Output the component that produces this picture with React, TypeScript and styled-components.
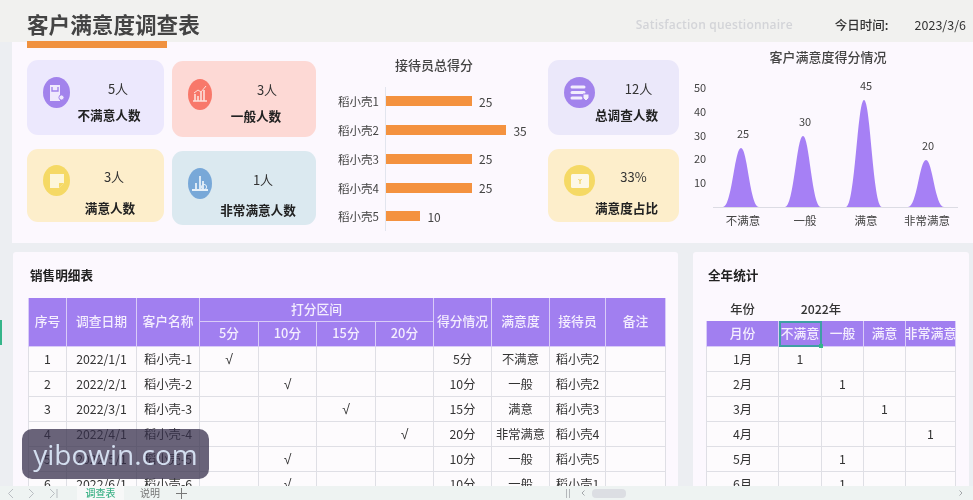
import { FC, ReactNode } from 'react'
import styled, { createGlobalStyle } from 'styled-components'

const GlobalStyle = createGlobalStyle`
  html, body {
    margin: 0;
    padding: 0;
    background: #eceef2;
  }
  body {
    font-family: "Noto Sans CJK SC", "Noto Sans", sans-serif;
    color: #333;
  }
`

const Page = styled.div`
  position: relative;
  width: 973px;
  height: 500px;
  overflow: hidden;
  display: flex;
  flex-direction: column;
  background: #eceef2;
  filter: blur(0.4px);
`

const RowMark = styled.div`
  position: absolute;
  left: 0;
  top: 320px;
  width: 2px;
  height: 25px;
  background: #35b58a;
`

const Header = styled.header`
  position: relative;
  flex: 0 0 42px;
  display: flex;
  align-items: center;
  padding: 6px 7px 0 27px;
  box-sizing: border-box;
  background: #f1f1ef;
`

const Title = styled.h1`
  margin: 0;
  font-size: 21.6px;
  font-weight: 700;
  color: #444;
  line-height: 30px;
`

const TitleBar = styled.div`
  position: absolute;
  left: 27px;
  top: 41px;
  width: 140px;
  height: 7px;
  background: #f0913f;
  z-index: 1;
`

const Subtitle = styled.span`
  flex: none;
  margin-left: 436px;
  width: 172px;
  font-family: "Open Sans", sans-serif;
  font-size: 12px;
  font-weight: 600;
  letter-spacing: 0.2px;
  white-space: nowrap;
  color: #d3d4d8;
`

const DateLabel = styled.span`
  margin-left: 27px;
  font-size: 12.5px;
  font-weight: 500;
  color: #333;
`

const DateValue = styled.span`
  margin-left: auto;
  font-size: 12.5px;
  color: #333;
`

const TopPanel = styled.section`
  flex: 0 0 201px;
  margin-left: 12px;
  padding-left: 15px;
  display: flex;
  box-sizing: border-box;
  background: #fcf8fe;
`

const CardColumn = styled.div<{ $top: number; $w: number; $left?: number }>`
  width: ${(p) => p.$w}px;
  margin-top: ${(p) => p.$top}px;
  margin-left: ${(p) => p.$left ?? 0}px;
  display: flex;
  flex-direction: column;
  gap: 14px;
`

const Card = styled.div<{ $bg: string; $h: number }>`
  height: ${(p) => p.$h}px;
  box-sizing: border-box;
  padding-left: 16px;
  border-radius: 11px;
  background: ${(p) => p.$bg};
  display: flex;
  align-items: center;
`

const IconDisc = styled.div<{ $bg: string; $w: number }>`
  flex: none;
  width: ${(p) => p.$w}px;
  height: 31px;
  margin-bottom: 10px;
  border-radius: 50%;
  background: ${(p) => p.$bg};
  display: flex;
  align-items: center;
  justify-content: center;
`

const CardText = styled.div<{ $right: number; $gap: number; $drop: number }>`
  flex: 1;
  box-sizing: border-box;
  padding: ${(p) => p.$drop}px ${(p) => p.$right}px 0 0;
  display: flex;
  flex-direction: column;
  align-items: center;
  gap: ${(p) => p.$gap}px;
`

const CardValue = styled.div<{ $offset: number }>`
  margin-left: ${(p) => p.$offset}px;
  font-size: 13px;
  line-height: 18px;
  color: #333;
`

const CardLabel = styled.div`
  font-size: 12.6px;
  font-weight: 700;
  line-height: 18px;
  color: #222;
  white-space: nowrap;
`

const BarChart = styled.div`
  width: 210px;
  margin-left: 22px;
  padding-top: 14px;
`

const ChartTitle = styled.div`
  font-size: 13px;
  font-weight: 500;
  line-height: 18px;
  color: #444;
  text-align: center;
`

const BarTitleWrap = styled.div`
  width: 192px;
  margin-bottom: 13px;
`

const BarRow = styled.div`
  height: 28.75px;
  display: grid;
  grid-template-columns: 47px 1fr;
  align-items: center;
  font-size: 11.5px;
  color: #444;
`

const BarTrack = styled.div`
  height: 100%;
  display: flex;
  align-items: center;
  gap: 7px;
  border-left: 1px solid #e2e5ee;
  font-size: 12px;
`

const BarFill = styled.div`
  height: 10px;
  background: #f4923f;
`

const ChartColumn = styled.div`
  width: 283px;
  margin-left: 11px;
  padding-top: 6px;
`

const ChartTitleWrap = styled.div`
  width: 276px;
`

const ChartSvg = styled.svg`
  display: block;
`

const ChartText = styled.text<{ $size: number }>`
  font-family: "Noto Sans CJK SC", sans-serif;
  font-size: ${(p) => p.$size}px;
  fill: #444;
`

const Bottom = styled.div`
  flex: 1;
  min-height: 0;
  margin-top: 9px;
  display: flex;
`

const SheetPanel = styled.section<{ $w: number; $left: number }>`
  width: ${(p) => p.$w}px;
  margin-left: ${(p) => p.$left}px;
  padding: 14px 0 0 ${(p) => (p.$w > 400 ? 15 : 13)}px;
  box-sizing: border-box;
  overflow: hidden;
  border-radius: 3px 3px 0 0;
  background: #fcf8fe;
`

const SheetTitle = styled.h2`
  margin: 0 0 14px 2px;
  font-size: 12.6px;
  font-weight: 700;
  line-height: 18px;
  color: #222;
`

const Table = styled.table<{ $w: number }>`
  width: ${(p) => p.$w}px;
  table-layout: fixed;
  border-collapse: collapse;
  font-size: 12.3px;
  color: #333;
`

const Th = styled.th<{ $h?: number }>`
  height: ${(p) => (p.$h ?? 22) - 2}px;
  padding: 0 0 2px;
  background: #a17ff0;
  border: 1px solid #d9ccf8;
  border-top: 0;
  font-size: 12.8px;
  line-height: 18px;
  font-weight: 500;
  color: #f4eefe;
  white-space: nowrap;
`

const SelectedTh = styled(Th)`
  position: relative;
  outline: 2px solid #3f9fa5;
  outline-offset: -2px;
  &::after {
    content: '';
    position: absolute;
    right: -2px;
    bottom: -2px;
    width: 4px;
    height: 4px;
    background: #35b58a;
  }
`

const ClipLabel = styled.div`
  display: flex;
  justify-content: center;
  overflow: hidden;
  font-size: 13px;
`

const Td = styled.td`
  height: 24px;
  padding: 0;
  background: #fdfbfd;
  border: 1px solid #dfdfe5;
  text-align: center;
  line-height: 18px;
  white-space: nowrap;
`

const Check = styled.span`
  font-family: "Liberation Sans", sans-serif;
  font-size: 14px;
`

const PlainTd = styled.td`
  height: 22px;
  padding: 0 0 1px;
  text-align: center;
  line-height: 18px;
  font-weight: 500;
`

const TabBar = styled.footer`
  flex: 0 0 14px;
  display: flex;
  align-items: center;
  font-size: 10px;
  color: #8a8f94;
  background: #eef3f2;
`

const NavIcon = styled.svg<{ $left: number }>`
  flex: none;
  margin-left: ${(p) => p.$left}px;
`

const ActiveTab = styled.span`
  width: 47px;
  margin-left: 19px;
  line-height: 14px;
  text-align: center;
  font-weight: 500;
  color: #3fb388;
  background: #f7f8f8;
`

const Tab = styled.span`
  margin-left: 16px;
  line-height: 14px;
  color: #777;
`

const ScrollThumb = styled.span`
  width: 34px;
  height: 9px;
  margin-left: 7px;
  border-radius: 4px;
  background: #dcdee3;
`

const Watermark = styled.div`
  position: absolute;
  left: 22px;
  top: 429px;
  width: 187px;
  height: 50px;
  border-radius: 10px;
  background: rgba(52, 46, 74, 0.74);
  display: flex;
  align-items: center;
  justify-content: center;
  font-family: "Open Sans", sans-serif;
  font-size: 28px;
  color: #d3deef;
`

const DocIcon = () => (
  <svg width="16" height="18" viewBox="0 0 16 18">
    <path d="M1 1h10v16H1z" fill="#efe9fd" />
    <path d="M3 3v4h6V3" fill="none" stroke="#a283ec" strokeWidth="1.4" />
    <circle cx="12.5" cy="13.5" r="2.6" fill="#efe9fd" stroke="#a283ec" />
  </svg>
)

const BarsIcon = () => (
  <svg width="16" height="18" viewBox="0 0 16 18">
    <path d="M1 16h14M3 16V9M6 16V11M9 16V7M12 16V5" stroke="#fde0da" strokeWidth="1.6" fill="none" />
    <path d="M2 8l4-3 3 2 5-6" stroke="#fde0da" fill="none" />
  </svg>
)

const NoteIcon = () => (
  <svg width="18" height="18" viewBox="0 0 18 18">
    <path d="M2 2h14v9l-5 5H2z" fill="#fdf6d8" />
    <path d="M11 16v-5h5" fill="#f5d965" />
  </svg>
)

const GrowthIcon = () => (
  <svg width="18" height="20" viewBox="0 0 18 20">
    <path d="M1 17h16M5 17V10M9 17V3M12 17V8" stroke="#e6f0f9" strokeWidth="1.8" fill="none" />
    <circle cx="13" cy="14" r="2.6" fill="none" stroke="#e6f0f9" />
    <path d="M15 16l2 2" stroke="#e6f0f9" />
  </svg>
)

const StackIcon = () => (
  <svg width="20" height="18" viewBox="0 0 20 18">
    <path d="M2 3h12M2 8.5h12M2 14h9" stroke="#f2edfd" strokeWidth="3" strokeLinecap="round" fill="none" />
    <path d="M13 10h6v4l-3 3-3-3z" fill="#f2edfd" stroke="#a283ec" />
  </svg>
)

const TicketIcon = () => (
  <svg width="20" height="16" viewBox="0 0 20 16">
    <rect x="1" y="1" width="18" height="14" rx="1.5" fill="#fdf8e6" />
    <path d="M8.5 6l1.5 1.8L11.5 6M10 7.8V11" stroke="#eccb4f" fill="none" />
  </svg>
)

interface StatProps {
  bg: string
  h: number
  disc: string
  discW: number
  value: string
  label: string
  right: number
  gap: number
  drop: number
  offset: number
  icon: ReactNode
}

const Stat: FC<StatProps> = ({ bg, h, disc, discW, value, label, right, gap, drop, offset, icon }) => (
  <Card $bg={bg} $h={h}>
    <IconDisc $bg={disc} $w={discW}>{icon}</IconDisc>
    <CardText $right={right} $gap={gap} $drop={drop}>
      <CardValue $offset={offset}>{value}</CardValue>
      <CardLabel>{label}</CardLabel>
    </CardText>
  </Card>
)

const barData = [
  { name: '稻小壳1', score: 25 },
  { name: '稻小壳2', score: 35 },
  { name: '稻小壳3', score: 25 },
  { name: '稻小壳4', score: 25 },
  { name: '稻小壳5', score: 10 },
]

const peaks = [
  { x: 741, score: 25, top: 148, label: '不满意' },
  { x: 803, score: 30, top: 136, label: '一般' },
  { x: 864, score: 45, top: 100, label: '满意' },
  { x: 926, score: 20, top: 160, label: '非常满意' },
]

const ticks = [
  { v: 50, y: 88 },
  { v: 40, y: 112 },
  { v: 30, y: 136 },
  { v: 20, y: 159 },
  { v: 10, y: 183 },
]

const peakPath = (x: number, top: number) =>
  `M${x - 18} 207C${x - 9} 207 ${x - 6.5} ${top} ${x} ${top}C${x + 6.5} ${top} ${x + 9} 207 ${x + 18} 207Z`

const detailRows = [
  ['1', '2022/1/1', '稻小壳-1', 0, '5分', '不满意', '稻小壳2'],
  ['2', '2022/2/1', '稻小壳-2', 1, '10分', '一般', '稻小壳2'],
  ['3', '2022/3/1', '稻小壳-3', 2, '15分', '满意', '稻小壳3'],
  ['4', '2022/4/1', '稻小壳-4', 3, '20分', '非常满意', '稻小壳4'],
  ['5', '2022/5/1', '稻小壳-5', 1, '10分', '一般', '稻小壳5'],
  ['6', '2022/6/1', '稻小壳-6', 1, '10分', '一般', '稻小壳1'],
]

const detailCols = [38, 70, 63, 59, 58, 59, 58, 58, 58, 56, 60]
const yearCols = [72, 43, 42, 42, 50]

const yearRows = [
  ['1月', 0],
  ['2月', 1],
  ['3月', 2],
  ['4月', 3],
  ['5月', 1],
  ['6月', 1],
] as const

const App: FC = () => (
  <Page>
    <GlobalStyle />
    <RowMark />
    <Header>
      <Title>客户满意度调查表</Title>
      <TitleBar />
      <Subtitle>Satisfaction questionnaire</Subtitle>
      <DateLabel>今日时间:</DateLabel>
      <DateValue>2023/3/6</DateValue>
    </Header>

    <TopPanel>
      <CardColumn $top={18} $w={137}>
        <Stat bg="#ece8fd" h={75} disc="#a283ec" discW={27} value="5人" label="不满意人数" right={16} gap={8} drop={9} offset={18} icon={<DocIcon />} />
        <Stat bg="#fdeecb" h={73} disc="#f5d965" discW={27} value="3人" label="满意人数" right={14} gap={13} drop={14} offset={8} icon={<NoteIcon />} />
      </CardColumn>
      <CardColumn $top={19} $w={144} $left={8}>
        <Stat bg="#fdd9d5" h={76} disc="#f8786a" discW={24} value="3人" label="一般人数" right={16} gap={8} drop={8} offset={22} icon={<BarsIcon />} />
        <Stat bg="#dbe9f0" h={74} disc="#78a8d8" discW={24} value="1人" label="非常满意人数" right={12} gap={12} drop={14} offset={10} icon={<GrowthIcon />} />
      </CardColumn>

      <BarChart>
        <BarTitleWrap>
          <ChartTitle>接待员总得分</ChartTitle>
        </BarTitleWrap>
        {barData.map((item) => (
          <BarRow key={item.name}>
            <span>{item.name}</span>
            <BarTrack>
              <BarFill style={{ width: item.score * 3.44 }} />
              {item.score}
            </BarTrack>
          </BarRow>
        ))}
      </BarChart>

      <CardColumn $top={18} $w={131}>
        <Stat bg="#ebe8fa" h={75} disc="#a283ec" discW={31} value="12人" label="总调查人数" right={26} gap={8} drop={8} offset={24} icon={<StackIcon />} />
        <Stat bg="#fdeecb" h={73} disc="#f5d965" discW={31} value="33%" label="满意度占比" right={24} gap={13} drop={14} offset={14} icon={<TicketIcon />} />
      </CardColumn>

      <ChartColumn>
        <ChartTitleWrap>
          <ChartTitle>客户满意度得分情况</ChartTitle>
        </ChartTitleWrap>
        <ChartSvg width="283" height="170" viewBox="690 66 283 170">
          {ticks.map((t) => (
            <ChartText key={t.v} $size={11} x="694" y={t.y + 4}>{t.v}</ChartText>
          ))}
          <line x1="713" y1="207.5" x2="958" y2="207.5" stroke="#dcdce4" />
          {peaks.map((p) => (
            <g key={p.label}>
              <path d={peakPath(p.x, p.top)} fill="#a680f5" />
              <ChartText $size={11} x={p.x + 2} y={p.top - 10} textAnchor="middle">{p.score}</ChartText>
              <ChartText $size={11.5} x={p.x + (p.label.length === 4 ? 1 : 2)} y={225} textAnchor="middle">{p.label}</ChartText>
            </g>
          ))}
        </ChartSvg>
      </ChartColumn>
    </TopPanel>

    <Bottom>
      <SheetPanel $w={665} $left={13}>
        <SheetTitle>销售明细表</SheetTitle>
        <Table $w={637}>
          <colgroup>
            {detailCols.map((w, i) => (
              <col key={i} style={{ width: w }} />
            ))}
          </colgroup>
          <thead>
            <tr>
              <Th rowSpan={2}>序号</Th>
              <Th rowSpan={2}>调查日期</Th>
              <Th rowSpan={2}>客户名称</Th>
              <Th colSpan={4} $h={23}>打分区间</Th>
              <Th rowSpan={2}>得分情况</Th>
              <Th rowSpan={2}>满意度</Th>
              <Th rowSpan={2}>接待员</Th>
              <Th rowSpan={2}>备注</Th>
            </tr>
            <tr>
              <Th $h={24}>5分</Th>
              <Th $h={24}>10分</Th>
              <Th $h={24}>15分</Th>
              <Th $h={24}>20分</Th>
            </tr>
          </thead>
          <tbody>
            {detailRows.map((r) => (
              <tr key={r[0] as string}>
                <Td>{r[0]}</Td>
                <Td>{r[1]}</Td>
                <Td>{r[2]}</Td>
                {[0, 1, 2, 3].map((slot) => (
                  <Td key={slot}>{r[3] === slot ? <Check>√</Check> : ''}</Td>
                ))}
                <Td>{r[4]}</Td>
                <Td>{r[5]}</Td>
                <Td>{r[6]}</Td>
                <Td />
              </tr>
            ))}
          </tbody>
        </Table>
      </SheetPanel>

      <SheetPanel $w={276} $left={15}>
        <SheetTitle>全年统计</SheetTitle>
        <Table $w={249}>
          <colgroup>
            {yearCols.map((w, i) => (
              <col key={i} style={{ width: w }} />
            ))}
          </colgroup>
          <tbody>
            <tr>
              <PlainTd>年份</PlainTd>
              <PlainTd colSpan={2}>2022年</PlainTd>
              <PlainTd />
              <PlainTd />
            </tr>
            <tr>
              <Th $h={25}>月份</Th>
              <SelectedTh $h={25}>不满意</SelectedTh>
              <Th $h={25}>一般</Th>
              <Th $h={25}>满意</Th>
              <Th $h={25}><ClipLabel>非常满意</ClipLabel></Th>
            </tr>
            {yearRows.map(([month, hit]) => (
              <tr key={month}>
                <Td>{month}</Td>
                {[0, 1, 2, 3].map((slot) => (
                  <Td key={slot}>{hit === slot ? '1' : ''}</Td>
                ))}
              </tr>
            ))}
          </tbody>
        </Table>
      </SheetPanel>
    </Bottom>

    <TabBar>
      <NavIcon $left={7} width="7" height="11" viewBox="0 0 7 11">
        <path d="M6 1L1.5 5.5 6 10" fill="none" stroke="#b9bdc2" />
      </NavIcon>
      <NavIcon $left={14} width="7" height="11" viewBox="0 0 7 11">
        <path d="M1 1l4.5 4.5L1 10" fill="none" stroke="#b9bdc2" />
      </NavIcon>
      <NavIcon $left={14} width="9" height="11" viewBox="0 0 9 11">
        <path d="M1 1l4.5 4.5L1 10M8 1v9" fill="none" stroke="#b9bdc2" />
      </NavIcon>
      <ActiveTab>调查表</ActiveTab>
      <Tab>说明</Tab>
      <NavIcon $left={16} width="11" height="11" viewBox="0 0 11 11">
        <path d="M5.5 0v11M0 5.5h11" fill="none" stroke="#777" />
      </NavIcon>
      <NavIcon $left={379} width="4" height="9" viewBox="0 0 4 9">
        <path d="M0.5 0v9M3.5 0v9" stroke="#b4b7bb" />
      </NavIcon>
      <NavIcon $left={11} width="4" height="6" viewBox="0 0 4 6">
        <path d="M3.5 0.5L1 3l2.5 2.5" fill="none" stroke="#a4a7ab" />
      </NavIcon>
      <ScrollThumb />
      <NavIcon $left={333} width="4" height="6" viewBox="0 0 4 6">
        <path d="M0.5 0.5L3 3 0.5 5.5" fill="none" stroke="#a4a7ab" />
      </NavIcon>
    </TabBar>

    <Watermark>yibowin.com</Watermark>
  </Page>
)

export default App
